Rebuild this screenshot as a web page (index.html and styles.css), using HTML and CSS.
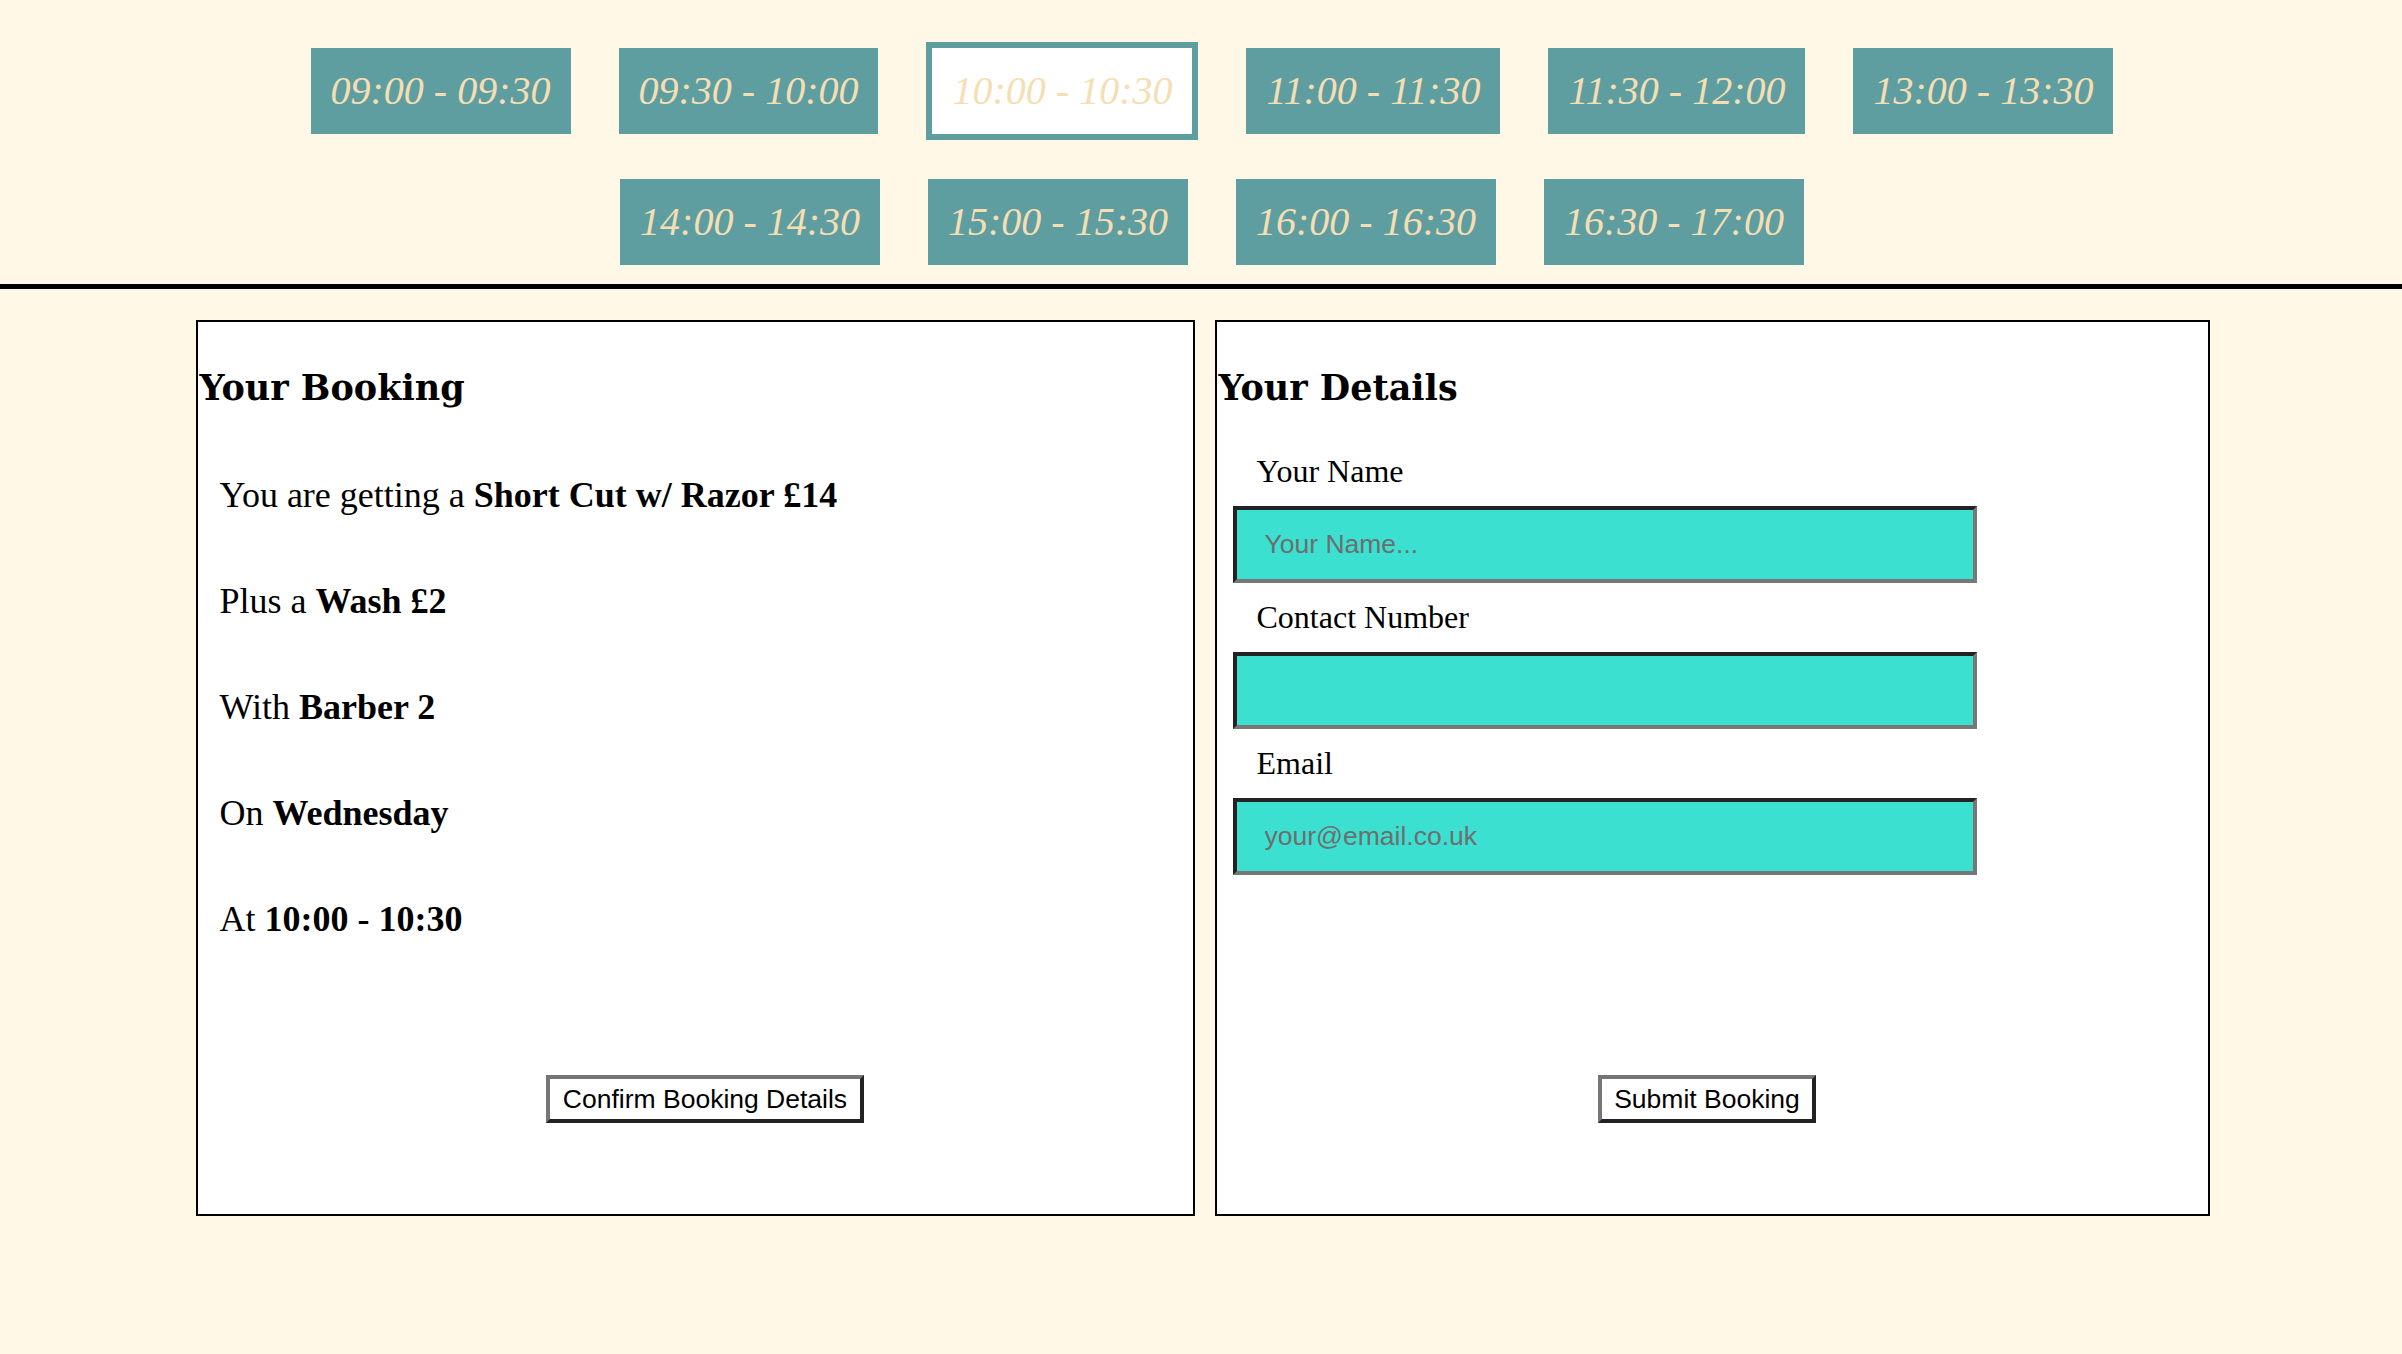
FILE: index.html
```html
<!DOCTYPE html>
<html lang="en">
<head>
<meta charset="utf-8">
<title>Booking</title>
<link rel="stylesheet" href="styles.css">
</head>
<body>
<div class="slots">
  <div class="slot-row">
    <button class="slot">09:00 - 09:30</button>
    <button class="slot">09:30 - 10:00</button>
    <button class="slot selected">10:00 - 10:30</button>
    <button class="slot">11:00 - 11:30</button>
    <button class="slot">11:30 - 12:00</button>
    <button class="slot">13:00 - 13:30</button>
  </div>
  <div class="slot-row second">
    <button class="slot">14:00 - 14:30</button>
    <button class="slot">15:00 - 15:30</button>
    <button class="slot">16:00 - 16:30</button>
    <button class="slot">16:30 - 17:00</button>
  </div>
</div>
<div class="divider"></div>
<main class="panels">
  <section class="panel booking">
    <h2 class="panel-title">Your Booking</h2>
    <div class="summary">
      <p>You are getting a <b>Short Cut w/ Razor £14</b></p>
      <p>Plus a <b>Wash £2</b></p>
      <p>With <b>Barber 2</b></p>
      <p>On <b>Wednesday</b></p>
      <p>At <b>10:00 - 10:30</b></p>
    </div>
    <div class="actions actions-left">
      <button class="action">Confirm Booking Details</button>
    </div>
  </section>
  <section class="panel details">
    <h2 class="panel-title">Your Details</h2>
    <form class="form">
      <label class="field-label" for="name">Your Name</label>
      <input class="field" id="name" type="text" placeholder="Your Name...">
      <label class="field-label" for="phone">Contact Number</label>
      <input class="field" id="phone" type="tel">
      <label class="field-label" for="email">Email</label>
      <input class="field" id="email" type="email" placeholder="your@email.co.uk">
    </form>
    <div class="actions actions-right">
      <button class="action" type="button">Submit Booking</button>
    </div>
  </section>
</main>
</body>
</html>
```

FILE: styles.css
```css
* {
  box-sizing: border-box;
}

body {
  margin: 0;
  background: #fff8e7;
  font-family: "Liberation Serif", "Times New Roman", serif;
  color: #000;
}

.slots {
  padding-top: 42px;
  padding-left: 22px;
}

.slot-row {
  display: flex;
  justify-content: center;
  align-items: center;
  gap: 48px;
  height: 98px;
}

.slot-row.second {
  margin-top: 39px;
  height: 86px;
}

.slot {
  font-family: "Liberation Serif", "Times New Roman", serif;
  font-style: italic;
  font-size: 40px;
  line-height: 46px;
  color: #f5deb3;
  background: #5f9ea0;
  border: none;
  padding: 20px 20px;
  margin: 0;
  cursor: pointer;
}

.slot.selected {
  background: #fff;
  border: 6px solid #5f9ea0;
}

.divider {
  margin-top: 19px;
  height: 5px;
  background: #000;
}

.panels {
  display: flex;
  justify-content: center;
  gap: 20px;
  margin-top: 31px;
  padding-left: 3px;
}

.panel {
  width: 999px;
  height: 896px;
  background: #fff;
  border: 2px solid #000;
  display: flex;
  flex-direction: column;
}

.panel.details {
  width: 995px;
}

.panel-title {
  font-family: "DejaVu Serif", serif;
  font-weight: bold;
  font-size: 35px;
  line-height: 40px;
  margin: 46px 0 0 2px;
}

.summary {
  display: flex;
  flex-direction: column;
  gap: 65px;
  margin-top: 67px;
  padding-left: 22px;
}

.summary p {
  margin: 0;
  font-size: 36px;
  line-height: 41px;
}

.form {
  display: flex;
  flex-direction: column;
  align-items: flex-start;
  gap: 16px;
  margin-top: 45px;
  padding-left: 16px;
}

.field-label {
  font-size: 32px;
  line-height: 37px;
  padding-left: 24px;
}

.field {
  width: 744px;
  height: 77px;
  background: #3be0d0;
  border-style: solid;
  border-width: 4px;
  border-color: #222 #777 #777 #222;
  padding: 0 28px;
  font-family: "Liberation Sans", Arial, sans-serif;
  font-size: 26.5px;
  color: #000;
  outline: none;
}

.field::placeholder {
  color: #6e6e6e;
}

.actions {
  margin-top: auto;
  margin-bottom: 91px;
  display: flex;
  justify-content: center;
}

.actions-left {
  padding-left: 20px;
}

.actions-right {
  padding-right: 10px;
}

.action {
  font-family: "Liberation Sans", Arial, sans-serif;
  font-size: 26.5px;
  line-height: 30.5px;
  padding: 5px 12.5px;
  background: #fff;
  color: #000;
  border-style: solid;
  border-width: 4px;
  border-color: #767676 #222 #222 #767676;
  cursor: pointer;
}
```
